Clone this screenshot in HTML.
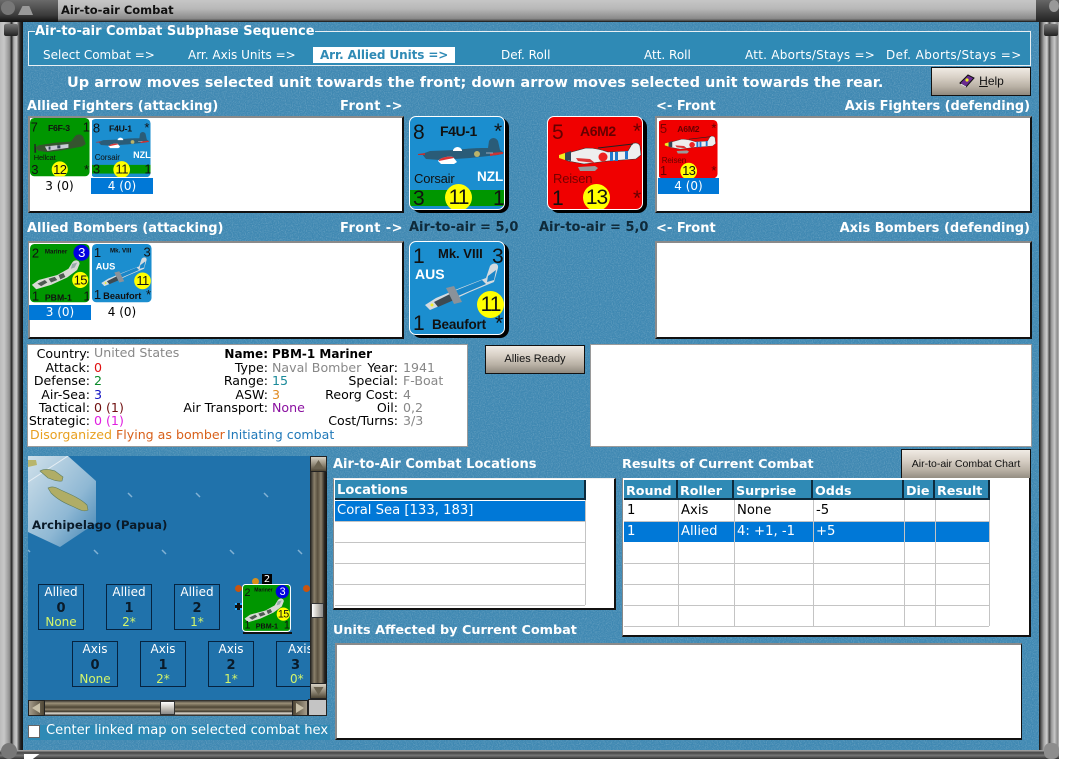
<!DOCTYPE html>
<html><head><meta charset="utf-8"><title>Air-to-air Combat</title>
<style>
*{box-sizing:border-box}
html,body{margin:0;padding:0;background:#fff}
body{width:1066px;height:762px;position:relative;overflow:hidden;font-family:"DejaVu Sans","Liberation Sans",sans-serif;font-size:12px;color:#000}
.a,.t{position:absolute}
.t{white-space:nowrap;line-height:16px;height:16px}
.i{font-size:12.6px}
.b{font-weight:bold}
.h{font-weight:bold;color:#fff;font-size:13px}
.s{color:#fff;font-size:12px}
.r{text-align:right}
.w{position:absolute;background:#fff;border-top:2px solid #8a8a8a;border-left:2px solid #8a8a8a;border-right:2px solid #111;border-bottom:2px solid #111}
.btn{position:absolute;border:1px solid #111;background:linear-gradient(#f0ebe4,#d8d0c6 35%,#b8b0a4 70%,#8f897e);text-align:center;font-family:"Liberation Sans",sans-serif;font-size:12px;color:#111}
.c{position:absolute;width:96px;height:94px;border-radius:7px;overflow:hidden;font-family:"Liberation Sans",sans-serif;color:#111;transform-origin:0 0}
.c span,.c svg,.c i{position:absolute;white-space:nowrap;line-height:1;font-style:normal}
.c svg{left:0;top:0}
.big{border:1px solid #fff}
.sh{position:absolute;width:97px;height:95px;background:#000;border-radius:9px}
.n{font-size:21px}
.y{background:#ff0;border-radius:50%;width:27px;height:27px;text-align:center;line-height:27px!important;font-size:21px;letter-spacing:-1px}
.m{font-weight:bold;font-size:14px;letter-spacing:-.4px}
.l{font-size:13px;letter-spacing:-.2px}
.nat{font-weight:bold;font-size:13.5px;color:#fff}
.cell{position:absolute;font-size:13.2px;line-height:22px;height:21px;padding-left:2px;white-space:nowrap}
.th{position:absolute;background:#2f8ab5;color:#fff;font-weight:bold;font-size:13.1px;line-height:20px;height:20px;padding-left:2px;top:480px;border-right:2px solid #0d2b3d;border-bottom:2px solid #0d2b3d}
.line{position:absolute;background:#c4c4c4}
.box{position:absolute;width:46px;height:46px;border:1px solid #06233f;background:#2072ab;color:#fff;text-align:center;font-size:12px;line-height:14px;overflow:hidden}
.box b{display:block;color:#0a1a28;font-size:13px;line-height:16px;margin:2px 0 -2px}
.box em{display:block;font-style:normal;color:#d4f56a;line-height:14px}
.iv{color:#888}
.sb{position:absolute;background:linear-gradient(#d8d2c4,#8a8270 60%,#4e4635);border:1px solid #222}
</style></head><body>

<svg width="0" height="0" style="position:absolute"><defs>
<symbol id="cor" viewBox="0 0 96 94"><path d="M12 37L20 34 46 33C60 31 72 31 78 31L79 24C81 20 86 20 88 24L90 33 94 36 88 38 60 41 30 43 16 42Z" fill="#2a5c78"/><path d="M8 37l7-1 0 2-7 0z" fill="#b33"/><path d="M80 36l13-1 0 2-13 2z" fill="#c33"/><path d="M43 33c2-4 7-4 9 0l0 1-9 0z" fill="#fff"/><path d="M28 44c3-4 12-5 15-4l4 5-3 2-13 0z" fill="#fff"/><path d="M29 43c3-3 10-4 14-3l1 1-15 3z" fill="#d33"/><circle cx="67" cy="37" r="3" fill="#b9b36a"/><path d="M76 36h7" stroke="#9ab" /></symbol>
<symbol id="zero" viewBox="0 0 96 94"><path d="M12 40L20 36 38 31C48 31 54 33 60 35L80 34 84 27C87 25 91 26 92 29L93 38 88 42 60 44 36 47 20 44Z" fill="#eee" stroke="#333" stroke-width=".6"/><path d="M11 38l6-2 0 7-6-2z" fill="#ee2"/><path d="M17 36l6-2 0 10-6-1z" fill="#345"/><circle cx="55" cy="40" r="4.5" fill="#e22"/><path d="M62 35h3v9h-3zm5 0h3v9h-3zm10-1h3v8h-3z" fill="#27c"/><path d="M30 50l17-1 3 2-3 3-15 0z" fill="#9a9a9a"/><path d="M28 41l14 1 5 4-17-2z" fill="#d33"/><path d="M50 31l35-4" stroke="#222" fill="none"/></symbol>
<symbol id="hel" viewBox="0 0 96 94"><path d="M8 48L14 44 40 40 66 38 72 30C76 25 84 26 86 31L90 42 84 46 52 52 28 55 14 53Z" fill="#35542f"/><path d="M24 46l38-4 0 6-34 5z" fill="#c9ccd6"/><path d="M30 46h3v5h-3zm14-2h5v5h-5z" fill="#345"/><path d="M7 42l2 0 1 14-3 0z" fill="#222"/></symbol>
<symbol id="bea" viewBox="0 0 96 94"><path d="M15 63L26 56 50 46 76 36 80 24C83 20 89 21 88 26L84 40 60 50 34 62 20 68Z" fill="#d4dbe0"/><path d="M42 50l30-12 4 4-28 12zM78 34l8-6-2 10-7 2z" fill="#1a86c8"/><path d="M24 60l16-8 4 6-16 7z" fill="#3d4a52"/><path d="M36 46l8-2 8 16-8 2z" fill="#8a929a"/><circle cx="22" cy="63" r="1.5" fill="#ee2"/></symbol>
<symbol id="mar" viewBox="0 0 96 94"><path d="M3 66L14 58 44 50 62 40 68 30C72 24 80 26 80 32L76 42 60 54 34 66 10 73Z" fill="#d8dad4"/><path d="M12 64l12-6 4 4-10 6zM30 56l10-3 4 5-10 4zM46 50l8-3 3 6-8 4z" fill="#4e5a52"/><path d="M68 32l8-2-4 8-6 2z" fill="#9aa"/></symbol>
<filter id="nz" x="0" y="0" width="100%" height="100%"><feTurbulence type="fractalNoise" baseFrequency=".85" numOctaves="2" seed="4"/><feColorMatrix values="0 0 0 0 1 0 0 0 0 1 0 0 0 0 1 1.1 0 0 0 -.45"/></filter>
<linearGradient id="hx" x1="0" y1="0" x2="1" y2="1"><stop offset="0" stop-color="#cfe0ea"/><stop offset=".6" stop-color="#8fb8d4"/><stop offset="1" stop-color="#3f83b3"/></linearGradient>
</defs></svg>

<!-- body bg -->
<div class="a" style="left:23px;top:22px;width:1016px;height:728px;background:#3f88b2"></div>
<svg class="a" style="left:23px;top:22px" width="1016" height="728"><rect width="1016" height="728" filter="url(#nz)" opacity=".4"/></svg>

<!-- frame -->
<div class="a" style="left:0;top:0;width:1059px;height:22px;background:linear-gradient(#c6c6c6,#b8b8b8 40%,#8a8a8a 85%,#555 93%,#111)"></div>
<div class="a" style="left:0;top:0;width:58px;height:22px;background:linear-gradient(#6a6a6a,#3a3a3a 70%,#111)"></div>
<div class="a" style="left:1px;top:1px;width:14px;height:14px;background:#777;border-radius:50%"></div>
<div class="a" style="left:18px;top:6px;width:15px;height:9px;background:#999;clip-path:polygon(30% 0,75% 0,100% 100%,0 100%)"></div>
<div class="a" style="left:1036px;top:0;width:23px;height:22px;background:linear-gradient(#666,#222)"></div>
<div class="a" style="left:1049px;top:0;width:10px;height:12px;background:#999;border-radius:50%"></div>
<div class="a" style="left:0;top:22px;width:23px;height:728px;background:linear-gradient(90deg,#bbb,#c8c8c8 18%,#8f8f8f 42%,#222 50%,#aaa 60%,#ccc 72%,#555 82%,#222 90%,#111)"></div>
<div class="a" style="left:4px;top:24px;width:14px;height:12px;background:linear-gradient(#777,#222);border-radius:2px"></div>
<div class="a" style="left:1039px;top:22px;width:20px;height:728px;background:linear-gradient(90deg,#111,#555 10%,#a8a8a8 25%,#d0d0d0 40%,#4a4a4a 52%,#999 62%,#c8c8c8 78%,#8a8a8a 92%,#bbb)"></div>
<div class="a" style="left:1044px;top:24px;width:14px;height:12px;background:linear-gradient(#777,#222);border-radius:2px"></div>
<div class="a" style="left:0;top:750px;width:1059px;height:9px;background:linear-gradient(#b0b0b0,#444 30%,#777 60%,#333)"></div>
<div class="a" style="left:1px;top:743px;width:16px;height:16px;background:#777;border-radius:50%"></div>
<div class="a" style="left:1044px;top:743px;width:15px;height:16px;background:#8d8d8d;border-radius:40%"></div>
<div class="a" style="left:24px;top:754px;width:22px;height:5px;background:#fff;clip-path:polygon(0 0,70% 0,40% 100%,0 100%)"></div>
<div class="t b" style="left:61px;top:2px;font-size:11.5px;color:#111">Air-to-air Combat</div>

<!-- Subphase -->
<div class="a" style="left:28px;top:31px;width:1003px;height:35px;background:#2f8ab5;border:1px solid #e8f0f4"></div>
<div class="a" style="left:35px;top:29px;width:280px;height:4px;background:#2f8ab5"></div>
<div class="t b" style="left:35px;top:24px;color:#fff;font-size:13px">Air-to-air Combat Subphase Sequence</div>
<div class="t s" style="left:43px;top:47px">Select Combat =&gt;</div>
<div class="t s" style="left:188px;top:47px">Arr. Axis Units =&gt;</div>
<div class="a" style="left:313px;top:47px;width:142px;height:16px;background:#fff"></div>
<div class="t b" style="left:320px;top:47px;color:#2f8ab5;letter-spacing:-.1px">Arr. Allied Units =&gt;</div>
<div class="t s" style="left:501px;top:47px">Def. Roll</div>
<div class="t s" style="left:644px;top:47px">Att. Roll</div>
<div class="t s" style="left:745px;top:47px;letter-spacing:.25px">Att. Aborts/Stays =&gt;</div>
<div class="t s" style="left:886px;top:47px;letter-spacing:.4px">Def. Aborts/Stays =&gt;</div>

<div class="t b" style="left:67px;top:75px;color:#fff;font-size:14.5px">Up arrow moves selected unit towards the front; down arrow moves selected unit towards the rear.</div>
<div class="btn" style="left:931px;top:67px;width:100px;height:29px;line-height:27px;padding-left:21px"><u>H</u>elp</div>
<svg class="a" style="left:959px;top:74px" width="16" height="15"><path d="M1 9l8-8 6 3-8 9z" fill="#6a2a90" stroke="#111"/><path d="M2 10l5 3" stroke="#eee"/><circle cx="8" cy="6" r="1.6" fill="#ee2"/></svg>

<!-- Labels -->
<div class="t h" style="left:27px;top:99px;font-size:12.9px">Allied Fighters (attacking)</div>
<div class="t h" style="left:340px;top:99px;letter-spacing:.4px">Front -&gt;</div>
<div class="t h" style="left:656px;top:99px">&lt;- Front</div>
<div class="t h r" style="right:36px;top:99px;font-size:12.9px">Axis Fighters (defending)</div>
<div class="t h" style="left:27px;top:221px">Allied Bombers (attacking)</div>
<div class="t h" style="left:340px;top:221px;letter-spacing:.4px">Front -&gt;</div>
<div class="t h" style="left:656px;top:221px">&lt;- Front</div>
<div class="t h r" style="right:36px;top:221px">Axis Bombers (defending)</div>
<div class="t b" style="left:409px;top:220px;font-size:13px;color:#0f2a3a">Air-to-air = 5,0</div>
<div class="t b" style="left:539px;top:220px;font-size:13px;color:#0f2a3a">Air-to-air = 5,0</div>

<!-- Panels -->
<div class="w" style="left:28px;top:116px;width:376px;height:97px"></div>
<div class="w" style="left:655px;top:116px;width:377px;height:97px"></div>
<div class="w" style="left:28px;top:241px;width:376px;height:98px"></div>
<div class="w" style="left:655px;top:241px;width:377px;height:98px"></div>

<!-- Small fighters -->
<div class="c" style="left:30px;top:118px;background:#009600;transform:scale(.62)">
<svg width="96" height="94"><use href="#hel"/></svg>
<span class="n" style="left:1px;top:5px">7</span><span class="m" style="left:29px;top:9px">F6F-3</span><span class="n" style="left:85px;top:5px">1</span>
<span class="l" style="left:6px;top:58px;font-size:12px">Hellcat</span><span class="n" style="left:2px;top:73px">3</span><span class="y" style="left:35px;top:70px;width:26px;height:26px">12</span><span class="n" style="left:87px;top:73px">*</span></div>
<div class="a" style="left:30px;top:178px;width:59px;height:16px;text-align:center;font-size:12px;line-height:16px">3 (0)</div>

<div class="c" style="left:91px;top:119px;background:#1b8ecf;transform:scale(.62)">
<svg width="96" height="94"><use href="#cor"/></svg>
<span class="n" style="left:3px;top:5px">8</span><span class="m" style="left:29px;top:8px">F4U-1</span><span class="n" style="left:86px;top:4px">*</span>
<span class="l" style="left:6px;top:55px">Corsair</span><span class="nat" style="left:68px;top:52px;font-size:14.5px">NZL</span>
<i style="left:0;top:74px;width:96px;height:14px;background:#009600"></i><span class="n" style="left:3px;top:71px">3</span><span class="y" style="left:36px;top:68px">11</span><span class="n" style="left:86px;top:71px">1</span></div>
<div class="a" style="left:91px;top:118px;width:62px;height:60px;border:1px solid #fff;"></div>
<div class="a" style="left:91px;top:178px;width:62px;height:16px;background:#0078d7;color:#fff;text-align:center;line-height:16px">4 (0)</div>

<div class="c" style="left:658px;top:120px;background:#f00000;transform:scale(.62)">
<svg width="96" height="94"><use href="#zero"/></svg>
<span class="n" style="left:3px;top:4px;color:#7a0000">5</span><span class="m" style="left:31px;top:7px;color:#600">A6M2</span><span class="n" style="left:86px;top:3px;color:#600">*</span>
<span class="l" style="left:6px;top:58px;color:#600">Reisen</span><span class="n" style="left:3px;top:72px;color:#600">1</span><span class="y" style="left:36px;top:69px">13</span><span class="n" style="left:86px;top:72px;color:#600">*</span></div>
<div class="a" style="left:658px;top:118px;width:61px;height:60px;border:1px solid #fff;border-bottom:0"></div>
<div class="a" style="left:658px;top:178px;width:61px;height:16px;background:#0078d7;color:#fff;text-align:center;line-height:16px">4 (0)</div>

<!-- Big counters -->
<div class="sh" style="left:412px;top:118px"></div>
<div class="c big" style="left:409px;top:116px;background:#1b8ecf">
<svg width="96" height="94"><use href="#cor"/></svg>
<span class="n" style="left:3px;top:5px">8</span><span class="m" style="left:30px;top:7px">F4U-1</span><span class="n" style="left:84px;top:4px">*</span>
<span class="l" style="left:4px;top:55px">Corsair</span><span class="nat" style="left:67px;top:53px">NZL</span>
<i style="left:0;top:73px;width:96px;height:16px;background:#009600"></i><span class="n" style="left:3px;top:71px">3</span><span class="y" style="left:35px;top:67px">11</span><span class="n" style="left:83px;top:71px">1</span></div>

<div class="sh" style="left:550px;top:118px"></div>
<div class="c big" style="left:547px;top:116px;background:#f00000">
<svg width="96" height="94"><use href="#zero"/></svg>
<span class="n" style="left:4px;top:5px;color:#600">5</span><span class="m" style="left:32px;top:7px;color:#600">A6M2</span><span class="n" style="left:85px;top:4px;color:#600">*</span>
<span class="l" style="left:5px;top:55px;color:#700">Reisen</span><span class="n" style="left:4px;top:71px">1</span><span class="y" style="left:35px;top:67px">13</span><span class="n" style="left:85px;top:71px;color:#600">*</span></div>

<div class="sh" style="left:412px;top:243px"></div>
<div class="c big" style="left:409px;top:241px;background:#1b8ecf">
<svg width="96" height="94"><use href="#bea"/></svg>
<span class="n" style="left:3px;top:4px">1</span><span class="m" style="left:28px;top:5px;font-size:13px;letter-spacing:0">Mk. VIII</span><span class="n" style="left:82px;top:4px">3</span>
<span class="nat" style="left:5px;top:25px;font-size:14px">AUS</span>
<span class="y" style="left:67px;top:49px">11</span><span class="n" style="left:3px;top:71px">1</span><span class="m" style="left:22px;top:76px;font-size:13.5px;letter-spacing:-.2px">Beaufort</span><span class="n" style="left:85px;top:71px">*</span></div>

<!-- Small bombers -->
<div class="c" style="left:30px;top:244px;background:#009600;transform:scale(.62)">
<svg width="96" height="94"><use href="#mar"/></svg>
<span class="n" style="left:3px;top:5px">2</span><span class="m" style="left:24px;top:8px;font-size:10px;letter-spacing:0">Mariner</span><span class="y" style="left:70px;top:1px;background:#0000e0;color:#fff;width:26px;height:26px">3</span>
<span class="y" style="left:68px;top:45px;width:26px;height:26px">15</span><span class="n" style="left:3px;top:74px">1</span><span class="m" style="left:24px;top:79px;font-size:14px;letter-spacing:0">PBM-1</span><span class="n" style="left:86px;top:74px">1</span></div>
<div class="a" style="left:29px;top:304px;width:62px;height:16px;background:#0078d7;color:#fff;text-align:center;line-height:16px">3 (0)</div>
<div class="a" style="left:29px;top:243px;width:62px;height:62px;border:1px solid #fff;"></div>
<div class="c" style="left:92px;top:244px;background:#1b8ecf;transform:scale(.62)">
<svg width="96" height="94"><use href="#bea"/></svg>
<span class="n" style="left:3px;top:4px">1</span><span class="m" style="left:29px;top:7px;font-size:10px;letter-spacing:0">Mk. VIII</span><span class="n" style="left:83px;top:3px">3</span>
<span class="nat" style="left:6px;top:29px;font-size:15px">AUS</span>
<span class="y" style="left:68px;top:46px;width:27px;height:27px">11</span><span class="n" style="left:3px;top:72px">1</span><span class="m" style="left:18px;top:77px;font-size:15px;letter-spacing:0">Beaufort</span><span class="n" style="left:87px;top:72px">*</span></div>
<div class="a" style="left:92px;top:304px;width:60px;height:16px;text-align:center;line-height:16px">4 (0)</div>

<!-- Info -->
<div class="a" style="left:27px;top:344px;width:441px;height:103px;background:#fff;border:1px solid #9a9a9a"></div>
<div class="t i r" style="left:0;width:90px;top:346px">Country:</div><div class="t i iv" style="left:94px;top:345px">United States</div>
<div class="t i r" style="left:0;width:90px;top:360px">Attack:</div><div class="t i" style="left:94px;top:360px;color:#e01010">0</div>
<div class="t i r" style="left:0;width:90px;top:373px">Defense:</div><div class="t i" style="left:94px;top:373px;color:#0a8a2a">2</div>
<div class="t i r" style="left:0;width:90px;top:387px">Air-Sea:</div><div class="t i" style="left:94px;top:387px;color:#1010c0">3</div>
<div class="t i r" style="left:0;width:90px;top:400px">Tactical:</div><div class="t i" style="left:94px;top:400px;color:#701010">0 (1)</div>
<div class="t i r" style="left:0;width:90px;top:413px">Strategic:</div><div class="t i" style="left:94px;top:413px;color:#e020e0">0 (1)</div>
<div class="t b r" style="left:0;width:268px;top:346px">Name:</div><div class="t b" style="left:272px;top:346px">PBM-1 Mariner</div>
<div class="t i r" style="left:0;width:268px;top:360px">Type:</div><div class="t i iv" style="left:272px;top:360px">Naval Bomber</div>
<div class="t i r" style="left:0;width:268px;top:373px">Range:</div><div class="t i" style="left:272px;top:373px;color:#1a8a9a">15</div>
<div class="t i r" style="left:0;width:268px;top:387px">ASW:</div><div class="t i" style="left:272px;top:387px;color:#e08a20">3</div>
<div class="t i r" style="left:0;width:268px;top:400px">Air Transport:</div><div class="t i" style="left:272px;top:400px;color:#8a10a0">None</div>
<div class="t i r" style="left:0;width:398px;top:360px">Year:</div><div class="t i iv" style="left:403px;top:360px">1941</div>
<div class="t i r" style="left:0;width:398px;top:373px">Special:</div><div class="t i iv" style="left:403px;top:373px">F-Boat</div>
<div class="t i r" style="left:0;width:398px;top:387px">Reorg Cost:</div><div class="t i iv" style="left:403px;top:387px">4</div>
<div class="t i r" style="left:0;width:398px;top:400px">Oil:</div><div class="t i iv" style="left:403px;top:400px">0,2</div>
<div class="t i r" style="left:0;width:398px;top:413px">Cost/Turns:</div><div class="t i iv" style="left:403px;top:413px">3/3</div>
<div class="t i" style="left:30px;top:427px;color:#e8a020">Disorganized</div><div class="t i" style="left:116px;top:427px;color:#d8601a">Flying as bomber</div><div class="t i" style="left:227px;top:427px;color:#1f78b8">Initiating combat</div>

<div class="btn" style="left:485px;top:345px;width:100px;height:29px;line-height:27px;font-size:11px">Allies Ready</div>
<div class="w" style="left:590px;top:344px;width:442px;height:103px;border-color:#9a9a9a;border-width:1px"></div>

<!-- Map -->
<div class="a" style="left:28px;top:456px;width:282px;height:244px;background:#2072ab;overflow:hidden">
<svg class="a" style="left:0;top:0" width="282" height="244">
<path d="M0 0h40l28 25v42l-36 24-32-15z" fill="url(#hx)"/><path d="M0 26l40-26" stroke="#e6eef4"/>
<path d="M0 4l8 0 1 5-9 2z" fill="#b8b56c"/>
<path d="M12 15c5-3 11-1 15 0l8 6-1 4c-6 1-10-2-14-3z" fill="#b0ad66" stroke="#5f7d5e" stroke-width=".6"/>
<path d="M20 32c6-3 10 1 15 3 9 4 18 8 24 14l1 5c-4 2-8 0-12-2-6-3-16-6-25-15z" fill="#b0ad66" stroke="#5f7d5e" stroke-width=".6"/>
<g stroke="#9cc2de" stroke-width="1.5" fill="none" opacity=".8"><path d="M100 37l4 4m64-4l4 4m64-4l4 4M0 94l2 2m64-2l4 4m64-4l4 4m64-4l4 4m64-4l4 4"/></g>
</svg>
<div class="t b" style="left:4px;top:61px;color:#0a1a28;font-size:11.8px">Archipelago (Papua)</div>
</div>
<div class="box" style="left:38px;top:584px">Allied<b>0</b><em>None</em></div>
<div class="box" style="left:106px;top:584px">Allied<b>1</b><em>2*</em></div>
<div class="box" style="left:174px;top:584px">Allied<b>2</b><em>1*</em></div>
<div class="box" style="left:72px;top:641px">Axis<b>0</b><em>None</em></div>
<div class="box" style="left:140px;top:641px">Axis<b>1</b><em>2*</em></div>
<div class="box" style="left:208px;top:641px">Axis<b>2</b><em>1*</em></div>
<div class="box" style="left:276px;top:641px;width:34px;border-right:0;padding-left:11px;text-align:left">Axis<b style="padding-left:3px">3</b><em style="padding-left:2px">0*</em></div>
<div class="a" style="left:262px;top:574px;width:10px;height:11px;background:#000;color:#fff;font-size:10px;line-height:11px;text-align:center">2</div>
<div class="a" style="left:252px;top:578px;width:7px;height:7px;border-radius:50%;background:#d8901a"></div>
<div class="a" style="left:235px;top:585px;width:7px;height:7px;border-radius:50%;background:#c9540e"></div>
<div class="a" style="left:303px;top:585px;width:7px;height:7px;border-radius:50%;background:#c9540e"></div>
<div class="a" style="left:235px;top:603px;width:7px;height:7px;background:#111;border:2px dotted #2af"></div>
<div class="c" style="left:242px;top:584px;background:#009600;transform:scale(.51);border:2px solid #fff">
<svg width="96" height="94"><use href="#mar"/></svg>
<span class="n" style="left:3px;top:5px">2</span><span class="m" style="left:22px;top:6px;font-size:10px;letter-spacing:0">Mariner</span><span class="y" style="left:64px;top:0;background:#0000e0;color:#fff;width:26px;height:26px">3</span>
<span class="y" style="left:66px;top:44px;width:26px;height:26px">15</span><span class="n" style="left:3px;top:68px">1</span><span class="m" style="left:25px;top:73px;letter-spacing:0">PBM-1</span><span class="n" style="left:80px;top:68px">1</span></div>
<div class="a" style="left:243px;top:632px;width:49px;height:2px;background:#111"></div>

<!-- scrollbars -->
<div class="a" style="left:310px;top:456px;width:17px;height:260px;background:linear-gradient(90deg,#1a1a1a,#8a7f6a 25%,#5a513f 45%,#8a7f6a 65%,#2a2620 85%,#111)"></div>
<div class="sb" style="left:310px;top:456px;width:17px;height:16px"></div>
<svg class="a" style="left:312px;top:458px" width="13" height="12"><path d="M6.5 2l5 8h-10z" fill="#6b6350"/></svg>
<div class="sb" style="left:310px;top:683px;width:17px;height:16px"></div>
<svg class="a" style="left:312px;top:685px" width="13" height="12"><path d="M6.5 10l5-8h-10z" fill="#6b6350"/></svg>
<div class="a" style="left:311px;top:603px;width:13px;height:15px;background:linear-gradient(90deg,#fff,#c8c4bc 50%,#888);border:1px solid #333"></div>
<div class="a" style="left:28px;top:700px;width:282px;height:16px;background:linear-gradient(#222,#9a8f78 20%,#4e4635 45%,#8a7f6a 60%,#3a3428 72%,#e8e4da 82%,#111)"></div>
<div class="sb" style="left:28px;top:700px;width:17px;height:16px;background:linear-gradient(90deg,#a59c8a,#4e4635)"></div>
<svg class="a" style="left:30px;top:702px" width="13" height="12"><path d="M2 6l8-5v10z" fill="#c8c0a8"/></svg>
<div class="sb" style="left:292px;top:700px;width:16px;height:16px;background:linear-gradient(90deg,#4e4635,#a59c8a)"></div>
<svg class="a" style="left:294px;top:702px" width="13" height="12"><path d="M10 6l-8-5v10z" fill="#c8c0a8"/></svg>
<div class="a" style="left:160px;top:701px;width:15px;height:14px;background:linear-gradient(#fff,#c8c4bc 50%,#888);border:1px solid #333"></div>
<div class="a" style="left:308px;top:699px;width:19px;height:17px;background:#c4c4c4;border:1px solid #222"></div>

<!-- checkbox -->
<div class="a" style="left:28px;top:725px;width:302px;height:15px;background:#2f8ab5"></div>
<div class="a" style="left:28px;top:725px;width:12px;height:13px;background:#fff;border:1px solid #666"></div>
<div class="t" style="left:46px;top:723px;color:#fff;font-size:13.1px">Center linked map on selected combat hex</div>

<!-- Locations -->
<div class="t h" style="left:333px;top:457px">Air-to-Air Combat Locations</div>
<div class="t h" style="left:622px;top:457px;font-size:12.8px">Results of Current Combat</div>
<div class="btn" style="left:901px;top:449px;width:130px;height:30px;line-height:28px;border-bottom:0;font-size:10.5px">Air-to-air Combat Chart</div>

<div class="a" style="left:333px;top:478px;width:283px;height:132px;background:#fff;border-right:2px solid #111;border-bottom:2px solid #111;border-left:1px solid #888;border-top:1px solid #eee"></div>
<div class="th" style="left:335px;width:251px;line-height:21px">Locations</div>
<div class="a" style="left:335px;top:501px;width:250px;height:20px;background:#0078d7"></div>
<div class="cell" style="left:335px;top:500px;color:#fff">Coral Sea [133, 183]</div>
<div class="line" style="left:335px;top:521px;width:250px;height:1px"></div>
<div class="line" style="left:335px;top:542px;width:250px;height:1px"></div>
<div class="line" style="left:335px;top:563px;width:250px;height:1px"></div>
<div class="line" style="left:335px;top:584px;width:250px;height:1px"></div>
<div class="line" style="left:335px;top:605px;width:250px;height:1px"></div>
<div class="line" style="left:585px;top:500px;width:1px;height:105px"></div>

<!-- Results -->
<div class="a" style="left:622px;top:478px;width:409px;height:159px;background:#fff;border-right:2px solid #111;border-bottom:2px solid #111;border-left:1px solid #888"></div>
<div class="th" style="left:624px;width:54px;line-height:21px;font-size:12.7px">Round</div>
<div class="th" style="left:678px;width:56px;line-height:21px;font-size:12.7px">Roller</div>
<div class="th" style="left:734px;width:79px;line-height:21px;font-size:12.7px">Surprise</div>
<div class="th" style="left:813px;width:91px;line-height:21px;font-size:12.7px">Odds</div>
<div class="th" style="left:904px;width:31px;line-height:21px;font-size:12.7px">Die</div>
<div class="th" style="left:935px;width:55px;line-height:21px;font-size:12.7px">Result</div>
<div class="a" style="left:624px;top:521px;width:365px;height:21px;background:#0078d7"></div>
<div class="line" style="left:624px;top:521px;width:365px;height:1px"></div>
<div class="line" style="left:624px;top:563px;width:365px;height:1px"></div>
<div class="line" style="left:624px;top:584px;width:365px;height:1px"></div>
<div class="line" style="left:624px;top:605px;width:365px;height:1px"></div>
<div class="line" style="left:624px;top:626px;width:365px;height:1px"></div>
<div class="line" style="left:678px;top:500px;width:1px;height:126px"></div>
<div class="line" style="left:734px;top:500px;width:1px;height:126px"></div>
<div class="line" style="left:813px;top:500px;width:1px;height:126px"></div>
<div class="line" style="left:904px;top:500px;width:1px;height:126px"></div>
<div class="line" style="left:935px;top:500px;width:1px;height:126px"></div>
<div class="line" style="left:989px;top:500px;width:1px;height:126px"></div>
<div class="cell" style="left:624px;top:500px;padding-left:3px">1</div><div class="cell" style="left:678px;top:500px;padding-left:3px">Axis</div><div class="cell" style="left:734px;top:500px;padding-left:3px">None</div><div class="cell" style="left:813px;top:500px;padding-left:3px">-5</div>
<div class="cell" style="left:624px;top:521px;color:#fff;padding-left:3px">1</div><div class="cell" style="left:678px;top:521px;color:#fff;padding-left:3px">Allied</div><div class="cell" style="left:734px;top:521px;color:#fff;padding-left:3px">4: +1, -1</div><div class="cell" style="left:813px;top:521px;color:#fff;padding-left:3px">+5</div>

<div class="t h" style="left:333px;top:623px;font-size:12.8px">Units Affected by Current Combat</div>
<div class="w" style="left:335px;top:643px;width:687px;height:97px;border-right:1px solid #111;border-bottom:2px solid #111"></div>
</body></html>
